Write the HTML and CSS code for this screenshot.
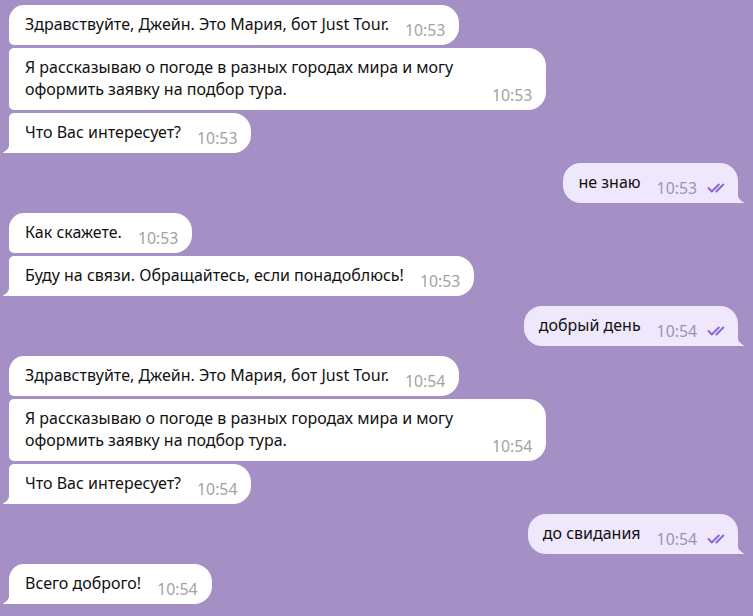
FILE: index.html
```html
<!DOCTYPE html>
<html lang="ru">
<head>
<meta charset="utf-8">
<title>Just Tour</title>
<link rel="stylesheet" href="styles.css">
</head>
<body>
<div class="chat">
  <div class="group in">
    <div class="msg first"><div class="text">Здравствуйте, Джейн. Это Мария, бот Just Tour.</div><span class="time">10:53</span></div>
    <div class="msg middle"><div class="text">Я рассказываю о погоде в разных городах мира и могу оформить заявку на подбор тура.</div><span class="time">10:53</span></div>
    <div class="msg last"><div class="text">Что Вас интересует?</div><span class="time">10:53</span><svg class="tail" viewBox="0 0 8 13" width="8" height="13"><path d="M8 0 C8 6 6 10 1.5 12.2 C0.4 12.7 0.8 13 2 13 L8 13 Z"/></svg></div>
  </div>
  <div class="group out">
    <div class="msg single"><div class="text">не знаю</div><span class="time">10:53</span><svg class="checks" viewBox="0 0 20 12" width="20" height="12"><path d="M1.5 6 L4.8 9.5 L11.8 2.5 M9.3 9.5 L16.3 2.5"/></svg><svg class="tail" viewBox="0 0 8 13" width="8" height="13"><path d="M0 0 C0 6 2 10 6.5 12.2 C7.6 12.7 7.2 13 6 13 L0 13 Z"/></svg></div>
  </div>
  <div class="group in">
    <div class="msg first"><div class="text">Как скажете.</div><span class="time">10:53</span></div>
    <div class="msg last"><div class="text">Буду на связи. Обращайтесь, если понадоблюсь!</div><span class="time">10:53</span><svg class="tail" viewBox="0 0 8 13" width="8" height="13"><path d="M8 0 C8 6 6 10 1.5 12.2 C0.4 12.7 0.8 13 2 13 L8 13 Z"/></svg></div>
  </div>
  <div class="group out">
    <div class="msg single"><div class="text">добрый день</div><span class="time">10:54</span><svg class="checks" viewBox="0 0 20 12" width="20" height="12"><path d="M1.5 6 L4.8 9.5 L11.8 2.5 M9.3 9.5 L16.3 2.5"/></svg><svg class="tail" viewBox="0 0 8 13" width="8" height="13"><path d="M0 0 C0 6 2 10 6.5 12.2 C7.6 12.7 7.2 13 6 13 L0 13 Z"/></svg></div>
  </div>
  <div class="group in">
    <div class="msg first"><div class="text">Здравствуйте, Джейн. Это Мария, бот Just Tour.</div><span class="time">10:54</span></div>
    <div class="msg middle"><div class="text">Я рассказываю о погоде в разных городах мира и могу оформить заявку на подбор тура.</div><span class="time">10:54</span></div>
    <div class="msg last"><div class="text">Что Вас интересует?</div><span class="time">10:54</span><svg class="tail" viewBox="0 0 8 13" width="8" height="13"><path d="M8 0 C8 6 6 10 1.5 12.2 C0.4 12.7 0.8 13 2 13 L8 13 Z"/></svg></div>
  </div>
  <div class="group out">
    <div class="msg single"><div class="text">до свидания</div><span class="time">10:54</span><svg class="checks" viewBox="0 0 20 12" width="20" height="12"><path d="M1.5 6 L4.8 9.5 L11.8 2.5 M9.3 9.5 L16.3 2.5"/></svg><svg class="tail" viewBox="0 0 8 13" width="8" height="13"><path d="M0 0 C0 6 2 10 6.5 12.2 C7.6 12.7 7.2 13 6 13 L0 13 Z"/></svg></div>
  </div>
  <div class="group in">
    <div class="msg single"><div class="text">Всего доброго!</div><span class="time">10:54</span><svg class="tail" viewBox="0 0 8 13" width="8" height="13"><path d="M8 0 C8 6 6 10 1.5 12.2 C0.4 12.7 0.8 13 2 13 L8 13 Z"/></svg></div>
  </div>
</div>
</body>
</html>
```
FILE: styles.css
```css
html, body {
  margin: 0;
  padding: 0;
  background: #a590c6;
  height: 100%;
  overflow: hidden;
}
body {
  font-family: "Noto Sans", "Open Sans", sans-serif;
  font-size: 16px;
  color: #111;
}
.chat {
  display: flex;
  flex-direction: column;
  gap: 10px;
  padding: 5px 15px 0 9px;
}
.group {
  display: flex;
  flex-direction: column;
  gap: 3px;
}
.group.in { align-items: flex-start; }
.group.out { align-items: flex-end; }
.msg {
  position: relative;
  display: flex;
  align-items: flex-end;
  padding: 8px 14px 4px 16px;
  background: #fff;
  border-radius: 18px;
}
.text {
  line-height: 22px;
  max-width: 451px;
  margin-bottom: 6px;
}
.time {
  font-size: 15.8px;
  line-height: 22px;
  margin-left: 16px;
  color: #a3a3a3;
  white-space: nowrap;
}
.in .first { border-radius: 15px 18px 18px 5px; }
.in .middle { border-radius: 5px 18px 18px 5px; }
.in .last { border-radius: 5px 18px 18px 0; }
.in .single { border-radius: 15px 18px 18px 0; }
.out .msg {
  background: #efe7fb;
  padding: 8px 11px 4px 15px;
}
.out .single { border-radius: 18px 18px 0 18px; }
.out .time { color: #9d92b8; }
.checks {
  margin-left: 10px;
  margin-bottom: 5px;
  fill: none;
  stroke: #8866d6;
  stroke-width: 1.9;
  stroke-linecap: round;
  stroke-linejoin: round;
}
.tail {
  position: absolute;
  bottom: 0;
  fill: #fff;
}
.in .tail { left: -7px; }
.out .tail { right: -7px; fill: #efe7fb; }
```
